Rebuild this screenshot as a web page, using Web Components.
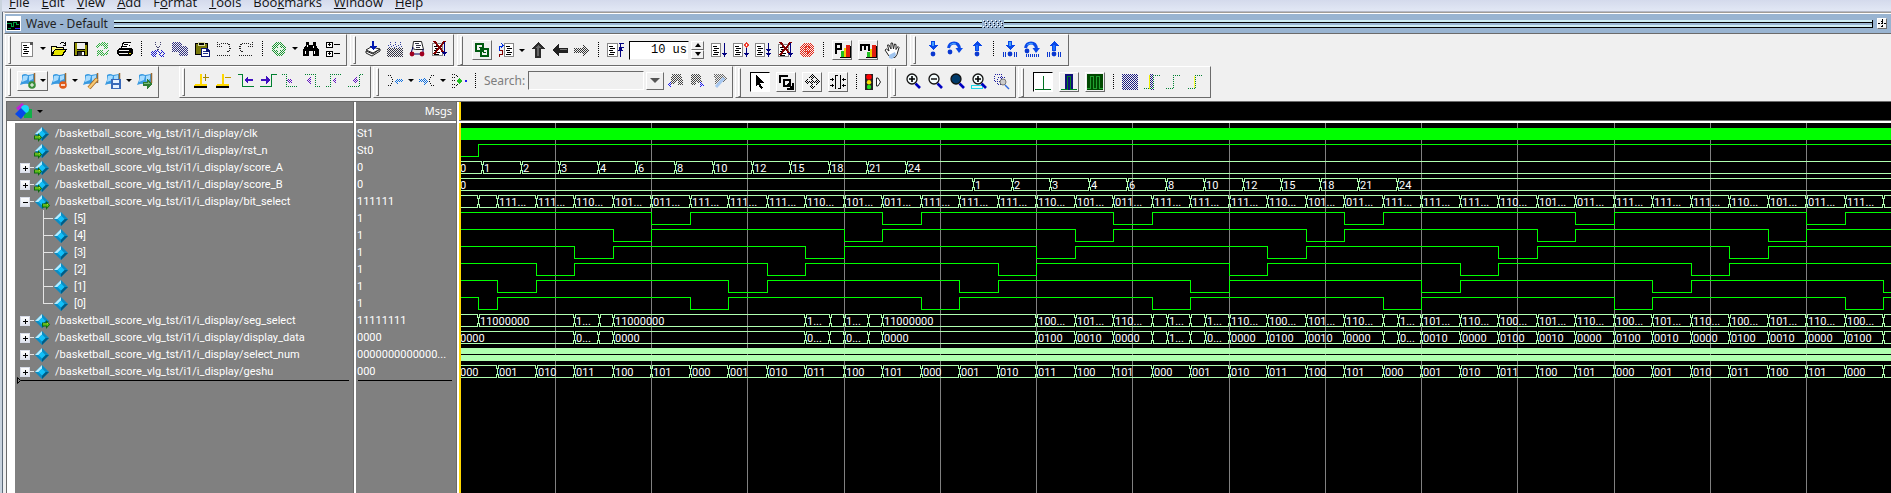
<!DOCTYPE html>
<html lang="en">
<head>
<meta charset="utf-8">
<title>Wave - Default</title>
<style>
  html, body { margin: 0; }
  body { background: #f0f0f0; font: 11px/17px Roboto, "Liberation Sans", sans-serif; color: #000; overflow: hidden; }
</style>
</head>
<body>
<wave-window></wave-window>
<script>
/* ---------- small helpers ---------- */
const p = (d, f) => `<path d="${d}" fill="${f}"/>`;
const l = (d, s, w = 1) => `<path d="${d}" fill="none" stroke="${s}" stroke-width="${w}"/>`;
let patternCount = 0;
/* Checkerboard fill that the toolbar uses for disabled pictures. */
function dither(color, draw) {
  const id = 'k' + (++patternCount);
  return `<defs><pattern id="${id}" width="2" height="2" patternUnits="userSpaceOnUse"><path d="M0 0h1v1h-1zM1 1h1v1h-1z" fill="${color}"/></pattern></defs>` + draw(`url(#${id})`);
}
function component(name, html, setup) {
  const template = document.createElement('template');
  customElements.define(name, class extends HTMLElement {
    connectedCallback() {
      if (this.shadowRoot) return;
      const root = this.attachShadow({ mode: 'open' });
      template.innerHTML = typeof html === 'function' ? html(this) : html;
      root.append(template.content.cloneNode(true));
      if (setup) setup(this, root);
    }
  });
}

/* ---------- pictures ---------- */
const page = (x, y, w = 11, h = 14) => p(`M${x} ${y}h${w}v${h}h-${w}z`, '#888') + p(`M${x+1} ${y+1}h${w-2}v${h-2}h-${w-2}z`, '#fff') +
  l(`M${x+2} ${y+3.5}h4M${x+3} ${y+5.5}h5M${x+2} ${y+7.5}h4M${x+3} ${y+9.5}h5M${x+2} ${y+11.5}h5`, '#000');
const navyArrow = '<path d="M13.5 1v13" stroke="#000080"/><path d="M11 11h5l-2.5 4z" fill="#000080"/>';
const cross = l('M3 0l10 12M14 0l-11 13', '#800000', 2);
const smooth = art => `<g shape-rendering="auto">${art}</g>`;
const wave = smooth(`<path d="M2 2q3-2 6 0l6-1v9l-5 1q-4-1-9 1l2-5z" fill="#3a9ae0"/><path d="M3 3q3-1 5 0l-1 4-5 2zM9 3l4-1v4l-4 2z" fill="#a8dcff"/><path d="M14.5 0v10" stroke="#9a6a32" stroke-width="1.5"/>`);
const foot = p('M5 13h8v2h-13v-2z', '#000') + p('M1 11h12v2h-13z', '#ffd700');
const diamondIcon = `<path d="M8 1l7 7-7 7-7-7z" fill="#0a8cc4"/><path d="M8 1L1 8h3.5L8 4.5z" fill="#b5ecff"/><path d="M8 15l7-7h-3.5L8 11.5z" fill="#005c86"/><path d="M8 4.5L11.5 8 8 11.5 4.5 8z" fill="#12c0f8"/>`;
const plus = '<path d="M4 6h6M7 3v6" stroke="#000" stroke-width="1.6"/>';
const lens = (inner, fill = '#f4fcfc') => smooth(`<path d="M10.5 10.5l4.5 4.5" stroke="#0000c0" stroke-width="2.6"/><circle cx="7" cy="6" r="5" fill="${fill}" stroke="#111" stroke-width="1.3"/>` + inner);
const downBlue = p('M6 0h4v4h3l-5 5-5-5h3z', '#0a48e8') + p('M7 1h2v4h-2z', '#3fa0ff');
const upBlue = p('M8 0l5 5h-3v5h-4v-5h-3z', '#0a48e8') + p('M7 4h2v5h-2z', '#1c70ff');
const overBlue = smooth('<path d="M1.5 7q1-5 5.500-5 5 0 5.500 6" fill="none" stroke="#0a48e8" stroke-width="3"/><path d="M3 4q3-3 6-1" fill="none" stroke="#44a8ff"/><path d="M8.500 7h7.500l-4 5z" fill="#0a48e8"/>');
const dot = (x, y, f = '#0a38d0') => smooth(`<circle cx="${x}" cy="${y}" r="2.4" fill="${f}"/>`);
const ticks = '<path d="M1.5 11v5M3.5 11v5M12.5 11v5M14.5 11v5" stroke="#0a38d0"/>';
const edge = d => `<path d="${d}" fill="none" stroke="#008030" stroke-dasharray="1 1"/>`;
const ICONS = {
  doc: page(2, 1, 12, 15) + p('M11 1h3v3h-3z', '#555'),
  open: p('M0 5h5l1 1h6v3h-12z', '#fffb80') + p('M0 15v-9h1v6l3-4h12l-4 7z', '#000') + p('M4 9h10l-3 5h-9z', '#e6e600') + l('M0 5.5h5l1 1h6v2M9 3q3-3 5 0M14.5 1v4M12 4.5h3', '#000'),
  save: p('M1 1h14v14h-14z', '#000') + p('M2 2h2v12h-2zM12 4h2v10h-2zM4 9h8v1h-8z', '#909000') + p('M4 2h8v6h-8z', '#f0f0f0') + p('M5 11h6v4h-6z', '#333') + p('M9 11h2v3h-2z', '#fff'),
  refresh: dither('#30b040', c => p('M1 6l3-4 5-1 2 2 2-1v6h-6l2-2-3-1-3 2zM15 9l-3 5-5 1-2-1-3 1v-6h6l-1 2 2 1 3-3z', c)),
  print: p('M6 1h8l-2 6h-8z', '#000') + p('M7 2h6l-1 5h-7z', '#fff') + l('M7 3.5h4M6 5.5h4', '#000') + p('M2 7h12l2 2v4l-3 2h-11l-2-3v-3z', '#000') + p('M2 9h10v1h-10zM2 12h9v1h-9z', '#f4f4f4') + p('M12 12h2v1h-2z', '#e0d000'),
  cut: dither('#1818d0', c => l('M5 10l-3 2 1 3h2l1-5 3-1M11 10l3 2-1 3h-2l-2-5', c, 2)) + '<path d="M5.500 1v3l4 6M10.500 1v3l-4 6" fill="none" stroke="#444470" stroke-dasharray="1 1"/>',
  copy: dither('#303080', c => p('M0 1h7l3 3v7h-10z', c) + p('M7 5h6l3 3v7h-9z', c)),
  paste: p('M1 2h13v12h-13z', '#000') + p('M2 3h11v10h-11z', '#77770a') + p('M4 1h7v4h-7z', '#d8d8a0') + p('M5 2h5v2h-5z', '#000') + p('M7 7h6l3 3v6h-9z', '#0a1470') + p('M8 8h4v3h3v4h-7z', '#fff') + l('M9 10.5h3M9 12.5h5', '#223090'),
  undo: '<path d="M1 5.500h5M1.500 1v4M3 3.500q5-3 10 0 3 4-2 8M1 14.500h14" fill="none" stroke="#222" stroke-dasharray="1 1"/>',
  redo: '<path d="M10 5.500h5M14.500 1v4M13 3.500q-5-3-10 0-3 4 2 8M1 14.500h14" fill="none" stroke="#222" stroke-dasharray="1 1"/>',
  add: dither('#189830', c => `<circle cx="8" cy="8" r="7" fill="${c}"/>`) + p('M7 4h2v3h3v2h-3v3h-2v-3h-3v-2h3z', '#e6f6e6'),
  find: p('M3 1h3v3h4v-3h3v3l3 5v6h-6v-5h-4v5h-6v-6l3-5z', '#000') + p('M2 10h1v3h-1zM11 10h1v3h-1zM4 4h1v2h-1zM10 5h1v2h-1z', '#fff'),
  tree: p('M1 1h7v6h-7zM1 10h7v6h-7zM9 3h6v1h-6zM9 12h6v1h-6z', '#000') + p('M2 2h5v4h-5zM2 11h5v4h-5z', '#fff') + l('M3 3.5h3M4.5 2v3M3 12.5h3M4.5 11v3', '#000'),
  compile: smooth(`<path d="M1 12l6 3 8-5v-2l-7 5-7-3z" fill="#fff" stroke="#222"/><path d="M1 9l5-3 9 2-7 4z" fill="#fff" stroke="#222"/>`) + `<path d="M8 0v6" stroke="#0018b0" stroke-width="2"/><path d="M4 5h8l-4 4z" fill="#0018b0"/>`,
  compileAll: dither('#334', c => p('M0 7h16v9h-16z', c)) + '<path d="M3.5 1v4M8.5 1v4M13.5 1v4M1 4.5l2 2 2-2M6 4.5l2 2 2-2M11 4.5l2 2 2-2" fill="none" stroke="#3040a0" stroke-dasharray="1 1"/>',
  simulate: smooth(`<path d="M4.5 .5h8l2 8h-8l-3-1z" fill="#fff" stroke="#222"/><path d="M4 6L2 12M14 8v4M3 13h10" stroke="#000060" fill="none"/>`) + l('M6 2.5h4M7 4.5h5M7 6.5h4', '#334') + dot(3, 13, '#a00020') + dot(13, 13, '#a00020'),
  breakSim: page(1, 2, 11, 13) + cross + navyArrow,
  link: `<path d="M2 2h7v7h-7zM7 7h7v7h-7z" fill="none" stroke="#005a10" stroke-width="2"/>` + p('M5 5h3v1h-3zM9 10h3v1h-3z', '#005a10'),
  stepDoc: page(6, 1, 10, 14) + l('M1.5 15v-3h3v-4h-3', '#800000') + l('M1.5 9v-4l1-1h2M3 1l2 2.5-2 2', '#0030e0'),
  up: p('M8 0l7 7h-4v9h-6v-9h-4z', '#2c2c2c') + p('M8 3l3 3h-2v8h-2v-8h-2z', '#666'),
  left: p('M0 8l7-6v4h9v5h-9v4z', '#222') + p('M8 7h7v1h-8z', '#777'),
  right: dither('#333', c => p('M16 8l-7-6v4h-9v5h9v4z', c)),
  restart: page(0, 1, 11, 14) + '<path d="M12 1.5h5M12 5.5h5M13.5 2v13" stroke="#000080"/><path d="M11 9l2.5-6 2.5 6z" fill="#000080"/>',
  run: page(0, 1, 10, 14) + navyArrow,
  runNext: page(0, 1, 10, 14) + navyArrow + p('M13 0l3 3-3 3-2-3z', '#f04030') + p('M13 2h1v2h-1z', '#fff'),
  runAll: page(0, 1, 10, 14) + navyArrow + p('M11 7h5l-2.5 3z', '#000080'),
  stop: dither('#e82010', c => p('M4 1h7l4 4v6l-4 4h-7l-3-4v-6z', c)) + l('M11 6q-1-2-4-1-2 3 0 6 3 1 4-2h-3', '#e04030'),
  profP: p('M12 3h4v12h-4z', '#e02010') + p('M7 9h3v6h-3z', '#20c020') + p('M10 6h2v9h-2z', '#f0d000') + l('M2 1v11M1 2h6v5h-5', '#000', 2) + l('M6 15.5h10M16.5 4v12', '#000'),
  profM: p('M12 3h4v12h-4z', '#e02010') + p('M7 10h3v5h-3z', '#20c020') + p('M10 7h2v8h-2z', '#f0d000') + l('M1 9v-6h8v6M5 3v5', '#000', 2) + l('M6 15.5h10M16.5 4v12', '#000'),
  hand: smooth(`<path d="M5 14l-4-6 1.5-1L5 9 3.500 3l1.500 0 2 4V1h1.500l1 6 1-5 1.500 .5v5l2-3 1 1-2 7-2 3z" fill="#fff" stroke="#222"/><path d="M5 13l6-3 1 3-4 4-3-1z" fill="#9fc4ef"/>`),
  stepIn: downBlue + dot(8, 13), stepOver: overBlue + dot(3, 11), stepOut: upBlue + dot(8, 13),
  stepIn2: downBlue + dot(8, 13) + ticks, stepOver2: overBlue + dot(3, 10) + '<path d="M2 14.5h14" stroke="#0a38d0" stroke-width="3" stroke-dasharray="1 1"/>', stepOut2: upBlue + dot(8, 13) + ticks,
  waveAdd: wave + smooth('<circle cx="12" cy="12" r="3.8" fill="#3b8f3b"/><path d="M12 10v4M10 12h4" stroke="#fff"/>'),
  waveDel: wave + smooth('<circle cx="12" cy="12" r="3.8" fill="#e05a18"/><path d="M10 12h4" stroke="#fff" stroke-width="1.5"/>'),
  waveEdit: wave + smooth('<path d="M14 6l-8 9" stroke="#a86820" stroke-width="4"/><path d="M14 6l-8 9" stroke="#f8c870" stroke-width="2.4"/>'),
  waveSave: wave + p('M6 6h10v10h-10z', '#3868b8') + p('M8 7h6v3h-6zM8 12h6v3h-6z', '#e4f0ff'),
  waveGo: wave + p('M6 9h4v-3l6 5-6 5v-3h-4z', '#2e7d32') + p('M7 10h4v-1l3 2h-7z', '#79bb79'),
  cursorAdd: foot + p('M6 1h2v10h-2z', '#ffd700') + p('M9 4h6v1h-6zM11 1h1v7h-1z', '#a88800'),
  cursorDel: foot + p('M6 1h2v10h-2z', '#ffd700') + p('M9 4h6v1h-6z', '#c09800'),
  prevEdge: l('M0 1.5h4.5v12h11', '#008030') + p('M6 7l4-4v3h5v2h-5v3z', '#4010c0'),
  nextEdge: l('M0 13.5h11.5v-12h5', '#008030') + p('M10 7l-4-4v3h-5v2h5v3z', '#4010c0'),
  e1: edge('M0 1.5h4.5v12h11') + dither('#6010c0', c => p('M5 6h5v5l-5-2z', c)),
  e2: edge('M1 1.5h10.5v12h4') + dither('#6010c0', c => p('M3 7l4-4v9z', c)),
  e3: edge('M0 13.5h4.5v-12h11') + dither('#6010c0', c => p('M6 7l4-3v7z', c)),
  e4: edge('M0 13.5h11.5v-12h4') + dither('#6010c0', c => p('M5 7l3-4 2 4-2 4z', c)),
  merge: '<path d="M1 2.500h2l3 4.500h1M1 12.500h2l3-4.500" fill="none" stroke="#111" stroke-width="1.500" stroke-dasharray="1 1"/>' + dither('#1070e0', c => p('M7 8l4-4v2h5v3h-5v3z', c)),
  split: '<path d="M15 2.500h-2l-3 4.500h-1M15 12.500h-2l-3-4.500" fill="none" stroke="#111" stroke-width="1.500" stroke-dasharray="1 1"/>' + dither('#1070e0', c => p('M9 8l-4-4v2h-5v3h5v3z', c)),
  join: '<path d="M1 1.500h4M1 14.500h4M5 2l3 3M5 13l3-3M1 4.500h4M1 11.500h4M1 7.500h3" fill="none" stroke="#111" stroke-dasharray="1 1"/>' + p('M5 8l3-3 3 3-3 3z', '#20c020') + l('M14 7.5h2', '#2020f0', 2),
  findNext: dither('#444', c => p('M5 1h9l2 7v4h-5v-6l-4 5h-4z', c)) + dither('#1818f0', c => p('M0 12l4-3v6z', c)),
  findPrev: dither('#444', c => p('M2 1h9l2 9h-4l-2-3v5h-5v-4z', c)) + dither('#1818f0', c => p('M16 12l-5-3v6z', c)),
  findOpt: dither('#666', c => p('M3 1h8l5 5-4 3-8 3v-4z', c)) + smooth(l('M13 5l-8 9', '#a8c8f0', 3)),
  select: p('M4 1l8 8h-4l3 5-2 1-3-5-2 3z', '#000'),
  zoomArea: l('M2 9v-7h8', '#000', 2) + l('M6 6h6v6h-6z', '#000', 2) + l('M10 10l4 4M15 9v6h-6', '#000', 1.5),
  pan: dither('#000', c => p('M8 0l4 4h-3v3h3v-3l4 4-4 4v-3h-3v3h3l-4 4-4-4h3v-3h-3v3l-4-4 4-4v3h3v-3h-3z', c)),
  twoCursor: l('M5.5 1v14M10.5 1v14M5 1.5h3M8 14.5h3', '#000') + '<path d="M0 5.5h4M0 11.5h4M12 5.5h4M12 11.5h4" stroke="#000"/>' + p('M2 4h1v3h-1zM2 10h1v3h-1zM13 4h1v3h-1zM13 10h1v3h-1z', '#000'),
  traffic: p('M0 0h8v16h-8z', '#222') + smooth('<circle cx="4" cy="3" r="2.8" fill="#ff0000"/><circle cx="4" cy="8.300" r="2.200" fill="#ffe000"/><circle cx="4" cy="13" r="2.200" fill="#20e020"/><path d="M11.5 4v8h1.5l2.500-4-2.500-4z" fill="#fff" stroke="#222"/>'),
  zin: lens(plus), zout: lens('<path d="M4 6h6" stroke="#222" stroke-width="1.6"/>'),
  zfull: lens('', '#003a6a'), zrange: '<path d="M0 12.5h11v3h-11z" fill="none" stroke="#20d8e8"/>' + lens(plus),
  zother: '<path d="M1.500 1.500h7v7h-7zM4.500 4.500h7v7h-7z" fill="none" stroke="#2020a0" stroke-dasharray="1 1"/>' + smooth('<circle cx="10" cy="9" r="3" fill="#ccc" stroke="#777"/><path d="M12 12l4 4" stroke="#3068e0" stroke-width="1.5"/>'),
  pulse1: l('M0 15.5h16M8.5 2v13', '#007020'),
  pulse2: p('M4 0h8v16h-8z', '#10107a') + l('M0 15.5h6.5v-13h3v13h6', '#008020'),
  pulse3: p('M0 0h16v16h-16z', '#004800') + l('M0 14.5h3.5v-12h3v12h3v-12h3v12h3', '#20a030'),
  p4: dither('#1a1a80', c => p('M0 0h16v16h-16z', c)),
  p5: dither('#1a1a80', c => p('M6 0h4v16h-4z', c)) + l('M5.5 1v14', '#f0f000') + edge('M0 14.5h9.5v-13h6'),
  p6: edge('M0 14.5h7.5v-13h7'), p7: l('M6.5 2v12', '#ffff40') + edge('M0 14.5h7.5v-13h7'),
};

component('tool-icon', el => `<style>:host{display:block;width:16px;height:16px;flex:none}svg{display:block;overflow:visible}</style>
<svg width="16" height="16" viewBox="0 0 16 16" shape-rendering="crispEdges" aria-hidden="true">${ICONS[el.getAttribute('name')]}</svg>`);

component('tool-button', el => `<style>
:host{display:flex;flex:none}
button{display:flex;align-items:center;font:inherit;border:0;background:none;margin:0;padding:0 3px;height:20px;outline:0}
:host([boxed]){padding:0 3px}
:host([boxed]) button{width:20px;padding:0 1px;border:1px solid;border-color:#fff #6b6b6b #6b6b6b #fff}
:host([pressed]) button{background:#fff;border-color:#000 #fff #fff #000}
:host([menu]) button{padding-right:0}
:host([framed]) button{border:1px solid;border-color:#fff #6b6b6b #6b6b6b #fff;padding:0 0 0 2px;width:31px;margin-left:1px}
i{width:10px;display:flex;justify-content:center}
:host([menu]) i{margin-left:3px}
i::before{content:"";border:3px solid transparent;border-top-color:#000;border-bottom:0}
</style><button type="button" aria-label="${el.getAttribute('name')}"><tool-icon name="${el.getAttribute('name')}"></tool-icon>${el.hasAttribute('menu') ? '<i></i>' : ''}</button>`);

component('tool-sep', `<style>:host{flex:none;width:11px;display:flex;justify-content:center}i{width:1px;height:16px;background:repeating-linear-gradient(#000 0 1px,transparent 1px 2px)}</style><i></i>`);

component('tool-group', `<style>
:host{display:flex;align-items:center;flex:none;box-sizing:border-box;height:32px;padding:0 3px 3px 0;border:1px solid;border-color:#fff #6b6b6b #6b6b6b #fff}
:host([center]){padding-bottom:0}
:host([gap]){margin-left:18px}
i{align-self:stretch;flex:none;width:1px;margin:1px 6px 0 2px;border:1px solid;border-color:#fff #6b6b6b #6b6b6b #fff}
:host(:not([center])) i{margin-bottom:-2px}
:host([tight]){padding-right:2px}
:host([tight]) i{margin-right:5px}
</style><i></i><slot></slot>`);

component('time-box', `<style>
:host{display:flex;flex:none;margin:0 4px 0 3px;gap:2px}
input{box-sizing:border-box;width:60px;height:19px;border:1px solid;border-color:#000 #f0f0f0 #f0f0f0 #000;margin:0;padding:0 1px;text-align:right;font:12px "Liberation Mono",monospace;background:#fff;border-radius:0}
div{display:flex;flex-direction:column}
button{width:13px;height:9px;padding:0;border:1px solid;border-color:#fff #6b6b6b #6b6b6b #fff;background:#f0f0f0;display:flex;align-items:center;justify-content:center}
button::before{content:"";border:3px solid transparent;border-bottom:4px solid #000;border-top:0}
button+button::before{border-top:4px solid #000;border-bottom:0}
</style><input aria-label="Run length" value="10 us"><div><button type="button" aria-label="More"></button><button type="button" aria-label="Less"></button></div>`);

component('search-box', `<style>
:host{display:flex;flex:none;align-items:center}
label{box-sizing:border-box;font:12px/18px "Noto Sans","Open Sans",sans-serif;color:#7d7d7d;width:47px;padding-left:3px}
input{box-sizing:border-box;width:116px;height:19px;margin:0 2px 0 0;border:1px solid;border-color:#6b6b6b #fff #fff #6b6b6b;background:#f0f0f0;border-radius:0;padding:0 2px}
button{width:18px;height:18px;padding:0;background:#f0f0f0;border:1px solid;border-color:#fff #6b6b6b #6b6b6b #fff;display:flex;align-items:center;justify-content:center}
button::before{content:"";border:5px solid transparent;border-top-color:#555;border-bottom:0}
</style><label for="q">Search:</label><input id="q"><button type="button" aria-label="History"></button>`);

component('menu-bar', `<style>
:host{display:flex;box-sizing:border-box;height:12px;overflow:hidden;align-items:flex-end;padding-left:1px;background:linear-gradient(#d4daec,#e2e8f5);border-bottom:1px solid #b4b8c6}
button{flex:none;border:0;background:none;margin:0;padding:0 6px;font:13px/17px "Open Sans",sans-serif;color:#111}
u{text-underline-offset:1px}
</style>` + ['<u>F</u>ile','<u>E</u>dit','<u>V</u>iew','<u>A</u>dd','F<u>o</u>rmat','<u>T</u>ools','Boo<u>k</u>marks','<u>W</u>indow','<u>H</u>elp'].map(t => `<button type="button">${t}</button>`).join(''));

component('title-bar', `<style>
:host{display:flex;align-items:center;box-sizing:border-box;height:22px;background:#99b4d1;border:solid #f4f4f4;border-width:3px 0 0 1px;border-top:1px solid #a09c96;box-shadow:inset 0 1px #fff;border-bottom:1px solid #6b6b6b;padding:1px 4px 0 1px;font:12px/18px "Noto Sans","Open Sans",sans-serif;color:#222}
svg{flex:none;margin-right:5px}
h1{font:inherit;margin:0 6px 0 0;white-space:nowrap}
.rule{flex:1;height:8px;box-sizing:border-box;background:linear-gradient(#cfeef4 0 2px,#000 2px 3px,transparent 3px 5px,#cfeef4 5px 7px,#000 7px)}
svg.grip{margin:0 1px}
.end{border-right:1px solid #000}
button{width:10px;height:11px;margin-left:4px;padding:0;border:1px solid;border-color:#fff #6b6b6b #6b6b6b #fff;background:#f4f4f4}
button svg{margin:0;display:block}
</style>
<svg width="15" height="15" shape-rendering="crispEdges"><path d="M0 0h15v15h-15z" fill="#fff"/><path d="M1 5h13v9h-13z" fill="#000"/><path d="M1 7.5h4v3h2v-4h3v2h3M2 12.5h3" stroke="#00a040" fill="none"/><path d="M9 12.5h5" stroke="#4020ff"/></svg>
<h1>Wave - Default</h1><div class="rule"></div><svg class="grip" width="20" height="8" shape-rendering="crispEdges"><path d="M0 .5h20M2 4.5h18" stroke="#fff" stroke-dasharray="1 3"/><path d="M2 2.5h18M0 6.5h20" stroke="#fff" stroke-dasharray="1 3"/><path d="M1 1.5h19M3 5.5h17" stroke="#112" stroke-dasharray="1 3"/><path d="M3 3.5h17M1 7.5h19" stroke="#112" stroke-dasharray="1 3"/></svg><div class="rule end"></div>
<button type="button" aria-label="Undock"><svg width="8" height="9" shape-rendering="crispEdges"><path d="M4 0v9M0 4.5h8M3 2h2M3 7h2" stroke="#000" stroke-dasharray="2 1" fill="none"/></svg></button>`);

/* ---------- signal list ---------- */
const PREFIX = '/basketball_score_vlg_tst/i1/i_display/';
const bitLow = { '[5]': 4, '[4]': 3, '[3]': 2, '[2]': 1, '[1]': 0, '[0]': -1 };
const SIGNALS = [
  { name: PREFIX + 'clk', value: 'St1', port: 'in', kind: 'clock' },
  { name: PREFIX + 'rst_n', value: 'St0', port: 'in', kind: 'reset' },
  { name: PREFIX + 'score_A', value: '0', port: 'in', kind: 'bus', fold: '+' },
  { name: PREFIX + 'score_B', value: '0', port: 'in', kind: 'bus', fold: '+' },
  { name: PREFIX + 'bit_select', value: '111111', port: 'out', kind: 'bus', fold: '-' },
  ...Object.keys(bitLow).map(name => ({ name, value: '1', kind: 'bit', child: true })),
  { name: PREFIX + 'seg_select', value: '11111111', port: 'out', kind: 'bus', fold: '+' },
  { name: PREFIX + 'display_data', value: '0000', kind: 'bus', fold: '+' },
  { name: PREFIX + 'select_num', value: '0000000000000...', kind: 'dense', fold: '+' },
  { name: PREFIX + 'geshu', value: '000', kind: 'bus', fold: '+' },
];

component('signal-name', el => {
  const s = SIGNALS[el.getAttribute('index')];
  const last = s.name === '[0]';
  const dx = s.port === 'in' ? 0 : 8;
  const arrow = s.port ? `<path d="M${dx} 9.5h4v-2.500l4 4.500-4 4.500v-2.500h-4z" fill="#0f6a0f"/><path d="M${dx + 1} 10.500h4v-1l2 2h-6z" fill="#c4f830"/><path d="M${dx + 1} 11.500h6l-2 2v-1h-4z" fill="#58c818"/>` : '';
  const lead = s.child ? `<span class="branch${last ? ' last' : ''}"></span>`
    : `<span class="fold">${s.fold ? `<button type="button" aria-label="Toggle"><svg width="8" height="8" shape-rendering="crispEdges"><path d="M2 4.5h5${s.fold === '+' ? 'M4.5 2v5' : ''}" stroke="#000"/></svg></button>` : ''}</span>`;
  return `<style>
:host{display:flex;align-items:center;height:17px;padding-left:5px;white-space:nowrap}
.fold{width:14px;height:17px;display:flex;align-items:center;flex:none}
.fold:has(button)::after{content:"";flex:1;height:1px;background:#e4e4e4}
button{width:10px;height:10px;padding:0;border:1px solid #d8dce8;background:linear-gradient(#fff,#dfe3ee);display:flex}
button svg{margin:0}
.branch{margin-left:23px;width:9px;height:17px;border-left:1px solid #e4e4e4;flex:none;background:linear-gradient(#e4e4e4,#e4e4e4) 0 8px/9px 1px no-repeat}
.last{align-self:flex-start;height:9px}
svg{flex:none;margin-right:5px}
</style>${lead}<svg width="16" height="16" viewBox="0 0 16 16">${diamondIcon}${arrow}</svg><span>${s.name}</span>`;
});

/* ---------- waveforms; x counts from the left edge of the trace area ---------- */
const ORIGIN = 459, at = k => Math.floor(38.5 + 38.5 * k), END = 2600;
const GREEN = '#00ff00', PALE = '#b0ffb0';
const abs = list => list.map(([x, t]) => [x - ORIGIN, t]);
const scores = ['1','2','3','4','6','8','10','12','15','18','21','24'];
const steps = (n, f) => Array.from({ length: n }, (_, k) => [at(k), k === 36 ? '' : f(k)]);
const tail = words => Array.from({ length: 12 }, (_, i) => [at(24 + i), words[i % 3]]);
const BUSES = {
  score_A: [[0, '0'], ...scores.map((t, i) => [Math.floor(23.5 + 38.5 * i), t])],
  score_B: [[0, '0'], ...scores.map((t, i) => [Math.floor(514.5 + 38.5 * i), t])],
  bit_select: [[0, ''], [19, ''], ...steps(37, k => ['111...','111...','110...','101...','011...','111...'][k % 6])],
  geshu: [[0, '000'], ...steps(37, k => ['001','010','011','100','101','000'][k % 6])],
  seg_select: abs([[459,''],[478,'11000000'],[574,'1...'],[599,''],[613,'11000000'],[805,'1...'],[830,''],[844,'1...'],[868,''],[882,'11000000'],[1036,'100...'],[1075,'101...'],[1113,'110...'],[1152,''],[1167,'1...'],[1190,''],[1205,'1...'],[1229,'110...'],[1267,'100...'],[1306,'101...'],[1344,'110...'],[1383,''],[1398,'1...']]).concat(tail(['101...','110...','100...']), [[at(36), '']]),
  display_data: abs([[459,'0000'],[574,'0...'],[598,''],[613,'0000'],[805,'0...'],[829,''],[844,'0...'],[868,''],[882,'0000'],[1036,'0100'],[1075,'0010'],[1113,'0000'],[1152,''],[1167,'1...'],[1190,''],[1205,'0...'],[1229,'0000'],[1267,'0100'],[1306,'0010'],[1344,'0000'],[1383,''],[1398,'0...']]).concat(tail(['0010','0000','0100']), [[at(36), '']]),
};
function drawBus(cells) {
  let d = '', texts = '';
  cells.forEach(([x, t], i) => {
    const next = i + 1 < cells.length ? cells[i + 1][0] : END;
    const a = i ? x + 1 : 0;
    d += `M${a} 2.5H${next}M${a} 14.5H${next}`;
    if (i) d += `M${x + 1.5} 2v4M${x - .5} 2v4M${x + .5} 5v7M${x + 1.5} 11v4M${x - .5} 11v4`;
    if (t) texts += `<text x="${i ? x + 2 : 1}" y="13">${t}</text>`;
  });
  return `<path d="${d}" stroke="${PALE}" fill="none"/>${texts}`;
}
function drawBit(name) {
  let d = 'M0 2.5', k = bitLow[name];
  if (k < 0) { d += 'H19.5V14.5H38.5V2.5'; k = 5; }
  for (; k < 60; k += 6) d += `H${at(k) + .5}V14.5H${at(k + 1) + .5}V2.5`;
  return l(d + `H${END}`, GREEN);
}
component('signal-trace', el => {
  const s = SIGNALS[el.getAttribute('index')];
  const art = {
    clock: () => p(`M0 3h${END}v12h-${END}z`, GREEN),
    reset: () => l(`M0 14.5H19.5V2.5H${END}`, GREEN),
    bit: () => drawBit(s.name),
    dense: () => p(`M0 2h${END}v6h-${END}zM0 9h${END}v6h-${END}z`, PALE),
    bus: () => drawBus(BUSES[s.name.split('/').pop()]),
  }[s.kind]();
  return `<style>:host{display:block;height:17px;position:relative}svg{display:block;width:100%;height:17px;overflow:hidden}text{fill:#fff;font:11px Roboto,"Liberation Sans",sans-serif}</style>
<svg shape-rendering="crispEdges">${art}<path d="M.5 2v12" stroke="${s.kind === 'bus' || s.kind === 'dense' ? '#2020c0' : '#ff2020'}" stroke-dasharray="5 3"/></svg>`;
});

const all = tag => SIGNALS.map((_, i) => `<${tag} index="${i}"></${tag}>`).join('');
component('wave-pane', `<style>
:host{display:grid;grid-template-columns:346px 3px 100px 3px minmax(0,1fr);grid-template-rows:18px 3px minmax(0,1fr);border-top:1px solid #6b6b6b;border-left:1px solid #6b6b6b;flex:1;min-height:0;margin-left:2px}
.bar{background:linear-gradient(90deg,#6b6b6b 1px,#fff 1px);grid-row:1/4}
.line{background:linear-gradient(#6b6b6b 1px,#fff 1px)}
.head{background:#808080;color:#fff;display:flex;align-items:center}
.head.msgs{justify-content:flex-end;padding-right:4px;font:11px/18px "Noto Sans",sans-serif}
.head button{border:0;background:none;padding:0 0 0 8px;display:flex;align-items:center;gap:4px}
.head i{border:3px solid transparent;border-top-color:#000;border-bottom:0}
.black{background:#000;border-left:2px solid #ffd800}
.names,.values{background:#808080;color:#fff;padding-top:2px;overflow:hidden}
.names{border-left:8px solid #fff}
.values div{height:17px;padding-left:1px;white-space:nowrap}
hr{border:0;height:1px;background:#000;margin:0 4px 0 2px}
.insert{display:flex;align-items:center;height:7px;margin:-3px 4px 0 2px}
.values .insert{height:7px;padding:0;margin:-3px 4px 0 2px}
.insert hr{flex:1;margin:0}
.waves{padding-top:2px;overflow:hidden;position:relative}
.waves signal-trace{margin-left:-2px}
.grid{position:absolute;inset:0;width:100%;height:100%}
</style>
<div class="head"><button type="button" aria-label="Objects"><svg width="18" height="16" viewBox="0 0 18 16"><path d="M1 5l6-5 3 3-5 6z" fill="#c020d8"/><path d="M9 6h8v9h-8z" fill="#10b048"/><circle cx="10" cy="6" r="4" fill="#18d8f8"/><path d="M6 5l5 5-5 6-6-5z" fill="#0848e8"/></svg><i></i></button></div>
<div class="bar"></div><div class="head msgs">Msgs</div><div class="bar"></div><div class="black"></div>
<div class="line" style="grid-area:2/1"></div><div class="line" style="grid-area:2/3"></div><div class="line" style="grid-area:2/5"></div>
<div class="names" style="grid-area:3/1">${all('signal-name')}<div class="insert"><svg width="4" height="7"><path d="M.5 .5v6l3-3z" fill="none" stroke="#000"/></svg><hr></div></div>
<div class="values" style="grid-area:3/3">${SIGNALS.map(s => `<div>${s.value}</div>`).join('')}<div class="insert"><hr></div></div>
<div class="black waves" style="grid-area:3/5"><svg class="grid" shape-rendering="crispEdges"><path d="${Array.from({ length: 24 }, (_, n) => `M${Math.floor(94.25 + 96.25 * n) + .5} 0V3000`).join('')}" stroke="#808080"/></svg>${all('signal-trace')}</div>`);

const btns = (names, attr = '') => names.split(' ').map(n => {
  if (n === '|') return '<tool-sep></tool-sep>';
  const menu = n.endsWith('*'), boxed = n.startsWith('#'), name = n.replace(/[*#]/g, '');
  return `<tool-button name="${name}"${menu ? ' menu' : ''}${boxed ? ' boxed' : ''}${attr}></tool-button>`;
}).join('');
component('wave-window', `<style>
:host{display:flex;flex-direction:column;min-height:100vh;box-sizing:border-box;border-left:2px solid #c9d3de}
.frame{flex:1;display:flex;flex-direction:column;border-left:1px solid #5d6b7a;padding-left:1px}
.row{display:flex;gap:2px;padding-left:1px}
.row:first-child{gap:3px}
.tools{padding-bottom:3px}
</style>
<menu-bar></menu-bar>
<div class="frame"><title-bar></title-bar>
<div class="tools">
<div class="row">
<tool-group tight>${btns('doc* open save refresh print | cut copy paste undo redo | add* find tree')}</tool-group>
<tool-group>${btns('compile compileAll simulate breakSim')}</tool-group>
<tool-group center>${btns('#link stepDoc* up left right | restart')}<time-box></time-box>${btns('run runNext runAll breakSim stop | #profP #profM hand')}</tool-group>
<tool-group>${btns('stepIn stepOver stepOut | stepIn2 stepOver2 stepOut2')}</tool-group>
</div>
<div class="row">
<tool-group tight>${btns('waveAdd*', ' framed')}${btns('waveDel* waveEdit waveSave* waveGo')}</tool-group>
<tool-group gap>${btns('cursorAdd cursorDel prevEdge nextEdge e1 e2 e3 e4')}</tool-group>
<tool-group tight>${btns('merge* split* join |')}<search-box></search-box>${btns('findNext findPrev findOpt')}</tool-group>
<tool-group center>${btns('#select', ' pressed')}${btns('#zoomArea #pan #twoCursor | traffic')}</tool-group>
<tool-group>${btns('zin zout zfull zrange zother')}</tool-group>
<tool-group center>${btns('#pulse1', ' pressed')}${btns('#pulse2 #pulse3 | p4 p5 p6 p7')}</tool-group>
</div></div>
<wave-pane></wave-pane></div>`);
</script>
</body>
</html>
